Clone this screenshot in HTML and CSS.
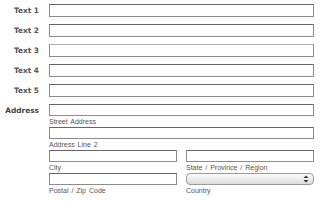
FILE: index.html
```html
<!DOCTYPE html>
<html lang="en">
<head>
    <meta charset="UTF-8">
    <meta name="viewport" content="width=device-width, initial-scale=1.0">
    <title>Form</title>
    <link rel="stylesheet" href="styles.css">
</head>
<body>
    <div class="form">
        <div class="form_group">
            <label for="text1">Text 1</label>
            <div class="field"><input type="text" id="text1"></div>
        </div>
        <div class="form_group">
            <label for="text2">Text 2</label>
            <div class="field"><input type="text" id="text2"></div>
        </div>
        <div class="form_group">
            <label for="text3">Text 3</label>
            <div class="field"><input type="text" id="text3" class="light"></div>
        </div>
        <div class="form_group">
            <label for="text4">Text 4</label>
            <div class="field"><input type="text" id="text4"></div>
        </div>
        <div class="form_group">
            <label for="text5">Text 5</label>
            <div class="field"><input type="text" id="text5"></div>
        </div>
        <div class="form_group address">
            <label for="street">Address</label>
            <div class="field">
                <div class="sub">
                    <input type="text" id="street">
                    <span class="hint">Street Address</span>
                </div>
                <div class="sub">
                    <input type="text" id="line2">
                    <span class="hint">Address Line 2</span>
                </div>
                <div class="half">
                    <div class="sub">
                        <input type="text" id="city">
                        <span class="hint">City</span>
                    </div>
                    <div class="sub">
                        <input type="text" id="state">
                        <span class="hint">State / Province / Region</span>
                    </div>
                    <div class="sub">
                        <input type="text" id="zip">
                        <span class="hint">Postal / Zip Code</span>
                    </div>
                    <div class="sub">
                        <div class="select">
                            <svg width="6" height="8" viewBox="0 0 6 8">
                                <path d="M3 0.5 L5.5 3 L0.5 3 Z M3 7.5 L5.5 5 L0.5 5 Z" fill="#333"/>
                            </svg>
                        </div>
                        <span class="hint">Country</span>
                    </div>
                </div>
            </div>
        </div>
    </div>
</body>
</html>
```

FILE: styles.css
```css
* {
    margin: 0;
    padding: 0;
    box-sizing: border-box;
}
body {
    background-color: #fff;
    font-family: "DejaVu Sans", sans-serif;
}
.form {
    padding: 4px 6px 0 0;
}
.form_group {
    display: flex;
    margin-bottom: 7px;
}
.form_group label {
    width: 39px;
    flex: none;
    text-align: right;
    font-size: 7.4px;
    font-weight: 700;
    color: #555;
    line-height: 13px;
    margin-right: 10px;
}
.address label {
    color: #444;
}
.field {
    flex: 1;
}
.field input {
    display: block;
    width: 100%;
    height: 13px;
    outline: none;
    border: 1px solid #8c8c8c;
    border-top-color: #666;
    background-color: #fff;
}
.field input.light {
    border-top-color: #b0b0b0;
}
.sub {
    display: flex;
    flex-direction: column;
}
.address .field input {
    height: 12px;
}
.hint {
    font-family: "Liberation Sans", sans-serif;
    font-size: 7px;
    word-spacing: 1px;
    color: #555;
    line-height: 12px;
    height: 11px;
}
.half {
    display: grid;
    grid-template-columns: 1fr 1fr;
    column-gap: 9px;
}
.select {
    height: 12px;
    border: 1px solid #9a9a9a;
    border-radius: 4px;
    background: linear-gradient(#fcfcfc, #dcdcdc);
    display: flex;
    justify-content: flex-end;
    align-items: center;
    padding-right: 4px;
}
.select svg {
    display: block;
}
```
